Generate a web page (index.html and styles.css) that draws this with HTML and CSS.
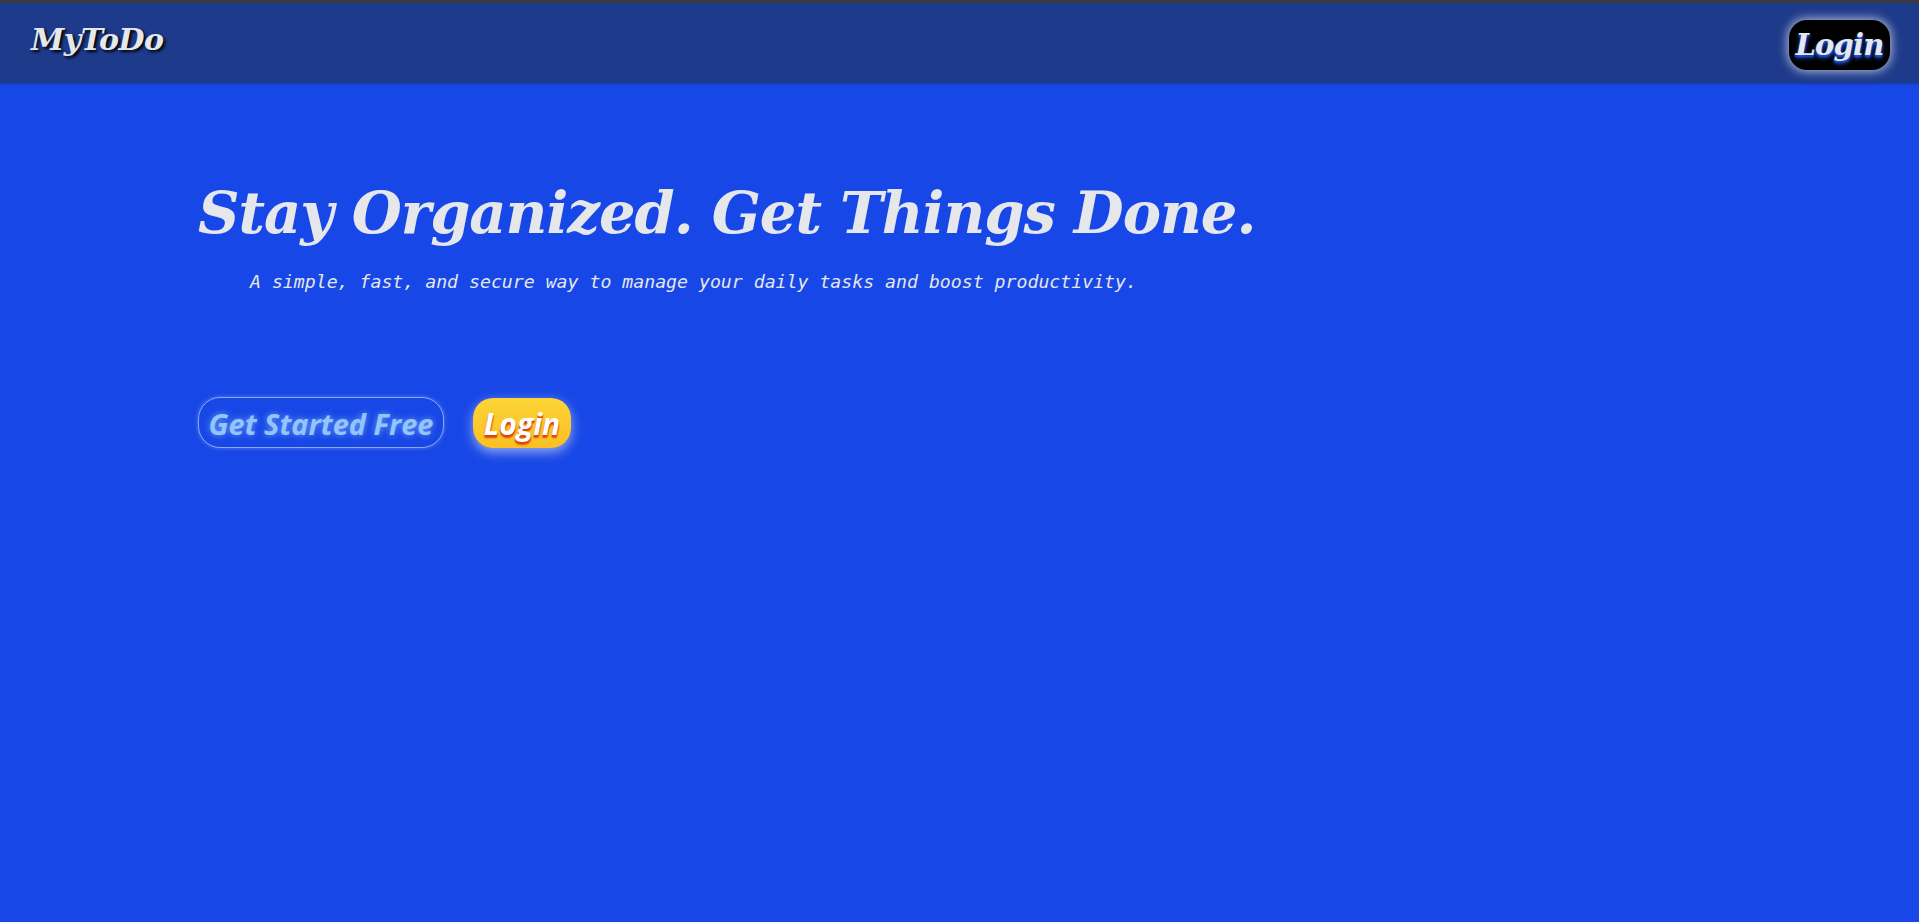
FILE: index.html
```html
<!DOCTYPE html>
<html lang="en">
<head>
<meta charset="utf-8">
<title>MyToDo</title>
<link rel="stylesheet" href="styles.css">
</head>
<body>
<header class="topbar">
  <div class="brand">MyToDo</div>
  <a class="nav-login" href="#">Login</a>
</header>
<main class="hero">
  <h1 class="hero-title">Stay Organized. Get Things Done.</h1>
  <p class="hero-sub">A simple, fast, and secure way to manage your daily tasks and boost productivity.</p>
  <div class="hero-actions">
    <a class="btn-outline" href="#">Get Started Free</a>
    <a class="btn-yellow" href="#">Login</a>
  </div>
</main>
</body>
</html>
```
FILE: styles.css
```css
html, body {
  margin: 0;
  padding: 0;
}
body {
  background: #1747e6;
  min-height: 922px;
  font-family: "Liberation Serif", serif;
}
.topbar {
  box-sizing: border-box;
  height: 83px;
  border-top: 3px solid #3a3b3e;
  background: #1e3a8a;
  display: flex;
  align-items: center;
  justify-content: space-between;
  padding: 0 29px 0 31px;
  box-shadow: 0 1px 2px rgba(0,0,0,0.25);
}
.brand {
  font-family: "DejaVu Serif", serif;
  font-weight: bold;
  font-style: italic;
  font-size: 30px;
  color: #e5e7eb;
  text-shadow: 2px 2px 3px #000;
  letter-spacing: -0.5px;
  margin-top: -8px;
}
.nav-login {
  box-sizing: border-box;
  display: flex;
  align-items: center;
  justify-content: center;
  width: 101px;
  height: 50px;
  margin-top: 3px;
  border-radius: 18px;
  background: #000;
  color: #e5e7eb;
  text-decoration: none;
  font-family: "DejaVu Serif", serif;
  font-weight: bold;
  font-style: italic;
  font-size: 29px;
  letter-spacing: -0.8px;
  text-shadow: 0 3px 4px #1d4ed8, 0 2px 2px #2563eb;
  box-shadow: 0 0 10px 2px rgba(255,255,255,0.6);
}
.hero {
  padding: 90px 0 0 198px;
}
.hero-title {
  margin: 0;
  font-family: "DejaVu Serif", serif;
  font-weight: bold;
  font-style: italic;
  font-size: 57.5px;
  line-height: 80px;
  letter-spacing: -1px;
  color: #e5e7eb;
}
.hero-sub {
  margin: 15px 0 0 52px;
  font-family: "DejaVu Sans Mono", monospace;
  font-style: italic;
  font-size: 18.2px;
  line-height: 28px;
  color: #e5e7eb;
}
.hero-actions {
  display: flex;
  align-items: center;
  gap: 29px;
  margin-top: 101px;
}
.btn-outline {
  box-sizing: border-box;
  display: flex;
  align-items: center;
  justify-content: center;
  width: 246px;
  height: 51px;
  border: 1.5px solid rgba(219,234,254,0.6);
  border-radius: 22px;
  color: #93c5fd;
  text-decoration: none;
  font-family: "Open Sans", sans-serif;
  font-weight: bold;
  font-style: italic;
  font-size: 29px;
  padding-top: 2px;
  letter-spacing: 0;
  text-shadow: 0 0 6px rgba(147,197,253,0.7);
  box-shadow: 0 0 4px rgba(255,255,255,0.3);
}
.btn-yellow {
  box-sizing: border-box;
  display: flex;
  align-items: center;
  justify-content: center;
  width: 98px;
  height: 50px;
  border-radius: 20px;
  background: linear-gradient(#fcd535, #fbbf24);
  color: #fff;
  text-decoration: none;
  font-family: "Open Sans", sans-serif;
  font-weight: bold;
  font-style: italic;
  font-size: 30px;
  padding-top: 2px;
  letter-spacing: 0;
  text-shadow: 0 3px 2px #dc4a0c, 0 2px 1px #c2410c;
  box-shadow: 0 4px 12px rgba(255,255,255,0.55);
}
```
